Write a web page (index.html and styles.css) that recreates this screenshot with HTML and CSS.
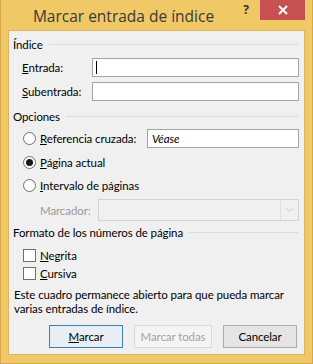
FILE: index.html
```html
<!DOCTYPE html>
<html>
<head>
    <title>Marcar entrada de índice</title>
    <link rel="stylesheet" href="styles.css">
</head>
<body>
    <div class="window">
        <div class="titlebar">
            <div class="title">Marcar entrada de índice</div>
            <div class="help">?</div>
            <div class="close">
                <svg width="10" height="10" viewBox="0 0 10 10"><path d="M1 1L9 9M9 1L1 9" stroke="#fff" stroke-width="2"/></svg>
            </div>
        </div>
        <div class="client">
            <div class="group-title group-first"><span>Índice</span></div>

            <div class="row row-entrada">
                <label class="field-label"><u>E</u>ntrada:</label>
                <div class="input"><span class="caret"></span></div>
            </div>
            <div class="row row-sub">
                <label class="field-label"><u>S</u>ubentrada:</label>
                <div class="input"></div>
            </div>

            <div class="group-title group-opciones"><span>Opciones</span></div>

            <div class="row row-ref">
                <span class="radio"></span>
                <label class="opt-label ref-label"><u>R</u>eferencia cruzada:</label>
                <div class="input input-ref"><i>Véase</i></div>
            </div>
            <div class="row row-radio row-pagina">
                <span class="radio checked"></span>
                <label class="opt-label"><u>P</u>ágina actual</label>
            </div>
            <div class="row row-radio row-intervalo">
                <span class="radio"></span>
                <label class="opt-label"><u>I</u>ntervalo de páginas</label>
            </div>
            <div class="row row-marcador">
                <label class="disabled-label">Marcador:</label>
                <div class="combo">
                    <div class="combo-arrow">
                        <svg width="7" height="5" viewBox="0 0 7 5"><path d="M0.5 0.5L3.5 3.5L6.5 0.5" stroke="#c4c4c4" fill="none"/></svg>
                    </div>
                </div>
            </div>

            <div class="group-title group-formato"><span>Formato de los números de página</span></div>

            <div class="row row-check row-negrita">
                <span class="checkbox"></span>
                <label class="opt-label"><u>N</u>egrita</label>
            </div>
            <div class="row row-check">
                <span class="checkbox"></span>
                <label class="opt-label"><u>C</u>ursiva</label>
            </div>

            <p class="note">Este cuadro permanece abierto para que pueda marcar<br>varias entradas de índice.</p>

            <div class="buttons">
                <div class="btn btn-default"><u>M</u>arcar</div>
                <div class="btn btn-disabled">Marcar todas</div>
                <div class="btn">Cancelar</div>
            </div>
        </div>
    </div>
</body>
</html>
```

FILE: styles.css
```css
body {
    margin: 0;
    padding: 0;
    font-family: 'Lato', 'Noto Sans', sans-serif;
    font-size: 11.5px;
    letter-spacing: -0.1px;
    color: #000;
}

.window {
    width: 313px;
    height: 364px;
    box-sizing: border-box;
    background: #f0c866;
    border: 1px solid #d6a849;
    border-top: none;
    padding: 0 7px 8px 7px;
    display: flex;
    flex-direction: column;
}

/* Barra de título */
.titlebar {
    height: 30px;
    display: flex;
    align-items: flex-start;
}

.title {
    flex: 1;
    text-align: center;
    font-family: 'Open Sans', sans-serif;
    font-size: 15.5px;
    letter-spacing: 0;
    color: #3a3a3a;
    padding-top: 5px;
    padding-left: 4px;
}

.help {
    width: 22px;
    height: 20px;
    line-height: 20px;
    text-align: center;
    font-family: 'Open Sans', sans-serif;
    font-weight: bold;
    font-size: 12px;
    color: #333;
    margin-right: 3px;
}

.close {
    width: 45px;
    height: 20px;
    background: #c75050;
    display: flex;
    align-items: center;
    justify-content: center;
}

/* Área de cliente */
.client {
    flex: 1;
    background: #f0f0f0;
    border: 1px solid #dcb35e;
    box-sizing: border-box;
    padding: 0 5px 0 4px;
    white-space: nowrap;
}

.group-title {
    height: 16px;
    display: flex;
    align-items: center;
    gap: 6px;
    padding-right: 1px;
}

.group-title::after {
    content: '';
    flex: 1;
    height: 1px;
    background: #dcdcdc;
}

.group-first { margin-top: 5px; }
.group-opciones { margin-top: 7px; }
.group-formato { margin-top: 3px; }

.row {
    display: flex;
    align-items: center;
}

.row-entrada { margin-top: 6px; height: 19px; }
.row-sub { margin-top: 5px; height: 19px; }

.field-label {
    width: 79px;
    box-sizing: border-box;
    flex-shrink: 0;
    padding-left: 9px;
}

.input {
    flex: 1;
    height: 19px;
    box-sizing: border-box;
    background: #fff;
    border: 1px solid #a5a5a5;
    display: flex;
    align-items: center;
    padding-left: 3px;
}

.caret {
    width: 1px;
    height: 13px;
    background: #000;
}

.row-ref { margin-top: 5px; height: 19px; }
.row-radio { height: 20px; }
.row-pagina { margin-top: 4px; }
.row-intervalo { margin-top: 3px; }

.radio {
    flex-shrink: 0;
    width: 11px;
    height: 11px;
    border: 1px solid #707070;
    border-radius: 50%;
    background: #fff;
    margin-left: 10px;
    margin-right: 4px;
    position: relative;
}

.radio.checked::after {
    content: '';
    position: absolute;
    left: 2px;
    top: 2px;
    width: 7px;
    height: 7px;
    border-radius: 50%;
    background: #1a1a1a;
}

.ref-label {
    width: 107px;
    flex-shrink: 0;
}

.input-ref {
    padding-left: 4px;
}

.row-marcador { margin-top: 4px; height: 22px; }

.disabled-label {
    color: #9a9a9a;
    width: 85px;
    box-sizing: border-box;
    flex-shrink: 0;
    padding-left: 27px;
}

.combo {
    flex: 1;
    height: 22px;
    box-sizing: border-box;
    border: 1px solid #d2d2d2;
    background: #f0f0f0;
    display: flex;
    justify-content: flex-end;
}

.combo-arrow {
    width: 17px;
    border-left: 1px solid #e0e0e0;
    display: flex;
    align-items: center;
    justify-content: center;
}

.row-check { height: 18px; }
.row-negrita { margin-top: 6px; }

.checkbox {
    flex-shrink: 0;
    width: 11px;
    height: 11px;
    border: 1px solid #707070;
    background: #fff;
    margin-left: 10px;
    margin-right: 4px;
}

.note {
    margin: 6px 0 0 0;
    line-height: 14px;
    padding-left: 1px;
}

.buttons {
    display: flex;
    gap: 11px;
    justify-content: flex-end;
    margin-top: 9px;
    padding-right: 2px;
}

.btn {
    width: 74px;
    height: 23px;
    box-sizing: border-box;
    border: 1px solid #acacac;
    background: #e5e5e5;
    display: flex;
    align-items: center;
    justify-content: center;
}

.btn-default {
    border-color: #3c7fb1;
    background: #e8eef4;
}

.btn-disabled {
    width: 78px;
    color: #a3a3a3;
    border-color: #d9d9d9;
    background: #f4f4f4;
}
```
